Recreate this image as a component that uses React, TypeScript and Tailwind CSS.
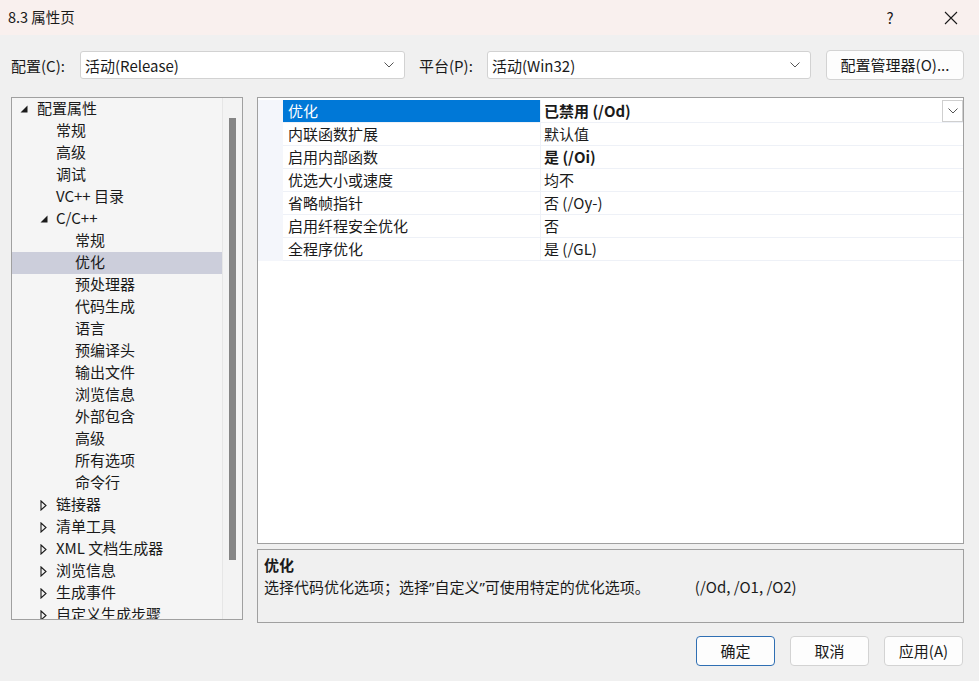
import React from 'react';

const FONT = { fontFamily: '"Noto Sans CJK SC", "Noto Sans", sans-serif' };

type TreeItem = {
  label: string;
  level: number;
  toggle?: 'open' | 'closed';
  selected?: boolean;
};

const treeItems: TreeItem[] = [
  { label: '配置属性', level: 0, toggle: 'open' },
  { label: '常规', level: 1 },
  { label: '高级', level: 1 },
  { label: '调试', level: 1 },
  { label: 'VC++ 目录', level: 1 },
  { label: 'C/C++', level: 1, toggle: 'open' },
  { label: '常规', level: 2 },
  { label: '优化', level: 2, selected: true },
  { label: '预处理器', level: 2 },
  { label: '代码生成', level: 2 },
  { label: '语言', level: 2 },
  { label: '预编译头', level: 2 },
  { label: '输出文件', level: 2 },
  { label: '浏览信息', level: 2 },
  { label: '外部包含', level: 2 },
  { label: '高级', level: 2 },
  { label: '所有选项', level: 2 },
  { label: '命令行', level: 2 },
  { label: '链接器', level: 1, toggle: 'closed' },
  { label: '清单工具', level: 1, toggle: 'closed' },
  { label: 'XML 文档生成器', level: 1, toggle: 'closed' },
  { label: '浏览信息', level: 1, toggle: 'closed' },
  { label: '生成事件', level: 1, toggle: 'closed' },
  { label: '自定义生成步骤', level: 1, toggle: 'closed' },
];

const props: { name: string; value: string; bold?: boolean }[] = [
  { name: '优化', value: '已禁用 (/Od)', bold: true },
  { name: '内联函数扩展', value: '默认值' },
  { name: '启用内部函数', value: '是 (/Oi)', bold: true },
  { name: '优选大小或速度', value: '均不' },
  { name: '省略帧指针', value: '否 (/Oy-)' },
  { name: '启用纤程安全优化', value: '否' },
  { name: '全程序优化', value: '是 (/GL)' },
];

function Chevron({ className = '' }: { className?: string }) {
  return (
    <svg width="10" height="6" viewBox="0 0 10 6" className={className}>
      <path d="M0.5 0.5 L5 5 L9.5 0.5" fill="none" stroke="#555" strokeWidth="1" />
    </svg>
  );
}

function Toggle({ kind }: { kind: 'open' | 'closed' }) {
  if (kind === 'open') {
    return (
      <svg width="8" height="8" viewBox="0 0 8 8">
        <path d="M7.5 0.5 L7.5 7.5 L0.5 7.5 Z" fill="#1a1a1a" />
      </svg>
    );
  }
  return (
    <svg width="7" height="11" viewBox="0 0 7 11">
      <path d="M1 1 L6 5.5 L1 10 Z" fill="none" stroke="#1a1a1a" strokeWidth="1.1" />
    </svg>
  );
}

function Dropdown({ value, width }: { value: string; width: string }) {
  return (
    <div
      className={`${width} flex h-[28px] items-center justify-between rounded-[3px] border border-[#d2d2d2] bg-white pl-[4px] pr-[10px] text-[15px] text-[#1a1a1a]`}
    >
      <span className="leading-none">{value}</span>
      <Chevron />
    </div>
  );
}

function DialogButton({ label, primary }: { label: string; primary?: boolean }) {
  return (
    <button
      type="button"
      className={`h-[30px] w-[79px] rounded-[4px] border bg-[#fdfdfd] text-[15px] text-[#1a1a1a] ${
        primary ? 'border-[#2f6fb3]' : 'border-[#d3d3d3]'
      }`}
    >
      {label}
    </button>
  );
}

export default function App() {
  return (
    <div className="flex h-[681px] w-[979px] flex-col bg-[#f0f0f0] text-[#1a1a1a]" style={FONT}>
      {/* Title bar */}
      <div className="flex h-[35px] items-center justify-between bg-[#f9f0ee] pl-[8px]">
        <span className="text-[14.5px] leading-none">8.3 属性页</span>
        <div className="flex items-center">
          <span className="w-[60px] pr-[6px] text-center text-[15px] leading-none">?</span>
          <span className="flex w-[56px] justify-center">
            <svg width="14" height="14" viewBox="0 0 14 14">
              <path d="M1 1 L13 13 M13 1 L1 13" stroke="#1a1a1a" strokeWidth="1.1" />
            </svg>
          </span>
        </div>
      </div>

      <div className="flex flex-1 flex-col pl-[11px] pr-[15px]">
        {/* Configuration row */}
        <div className="mt-[15px] flex h-[30px] items-center">
          <span className="w-[69px] text-[15px] leading-none">配置(C):</span>
          <Dropdown value="活动(Release)" width="w-[325px]" />
          <span className="ml-[14px] w-[68px] text-[15px] leading-none">平台(P):</span>
          <Dropdown value="活动(Win32)" width="w-[324px]" />
          <button
            type="button"
            className="ml-[15px] h-[30px] w-[138px] rounded-[4px] border border-[#d3d3d3] bg-[#fdfdfd] text-[15px]"
          >
            配置管理器(O)...
          </button>
        </div>

        {/* Main area */}
        <div className="mt-[17px] flex gap-[14px]">
          {/* Tree */}
          <div className="flex h-[523px] w-[232px] overflow-hidden border border-[#a0a0a0] bg-[#f5f5f5]">
            <div className="w-[210px] overflow-hidden">
              {treeItems.map((item, i) => (
                <div
                  key={i}
                  className={`flex h-[22px] items-center ${item.selected ? 'bg-[#cccedb]' : ''}`}
                >
                  <div
                    className={`flex shrink-0 items-center ${
                      item.level === 0 ? 'w-[25px] pl-[8px]' : item.level === 1 ? 'w-[44px] pl-[28px]' : 'w-[63px]'
                    }`}
                  >
                    {item.toggle && <Toggle kind={item.toggle} />}
                  </div>
                  <span className="whitespace-nowrap pb-[3px] text-[15px] leading-none">{item.label}</span>
                </div>
              ))}
            </div>
            <div className="flex-1 border-l border-[#e6e6e6] bg-[#f3f3f3] pt-[20px]">
              <div className="ml-[6px] h-[442px] w-[7px] bg-[#858585]" />
            </div>
          </div>

          {/* Right column */}
          <div className="flex flex-1 flex-col gap-[5px]">
            <div className="h-[447px] border border-[#a0a0a0] bg-white pt-[2px]">
              {props.map((p, i) => (
                <div key={i} className="flex h-[23px] text-[15px]">
                  <div className="w-[25px] shrink-0 bg-[#f4f6fb]" />
                  <div
                    className={`flex w-[258px] shrink-0 items-center border-b border-r border-[#eef1f7] pl-[5px] ${
                      i === 0 ? 'bg-[#0078d7] text-white' : ''
                    }`}
                  >
                    <span className="pb-[1px] leading-none">{p.name}</span>
                  </div>
                  <div className="flex flex-1 items-center justify-between border-b border-[#eef1f7] pl-[3px]">
                    <span className={`pb-[1px] leading-none ${p.bold ? 'font-bold' : ''}`}>{p.value}</span>
                    {i === 0 && (
                      <div className="flex h-[22px] w-[21px] items-center justify-center border border-[#cfcfcf] bg-white">
                        <Chevron />
                      </div>
                    )}
                  </div>
                </div>
              ))}
            </div>

            <div className="h-[74px] border border-[#a0a0a0] bg-[#f0f0f0] px-[6px] pt-[4px]">
              <div className="text-[15px] font-bold leading-[22px]">优化</div>
              <div className="text-[15px] leading-[22px]">
                选择代码优化选项；选择<span style={{ fontFamily: '"Noto Sans", sans-serif' }}>”</span>自定义
                <span style={{ fontFamily: '"Noto Sans", sans-serif' }}>”</span>可使用特定的优化选项。
                <span className="ml-[45px]">(/Od, /O1, /O2)</span>
              </div>
            </div>
          </div>
        </div>

        {/* Buttons */}
        <div className="mt-[13px] flex justify-end gap-[15px] pr-[1px]">
          <DialogButton label="确定" primary />
          <DialogButton label="取消" />
          <DialogButton label="应用(A)" />
        </div>
      </div>
    </div>
  );
}
